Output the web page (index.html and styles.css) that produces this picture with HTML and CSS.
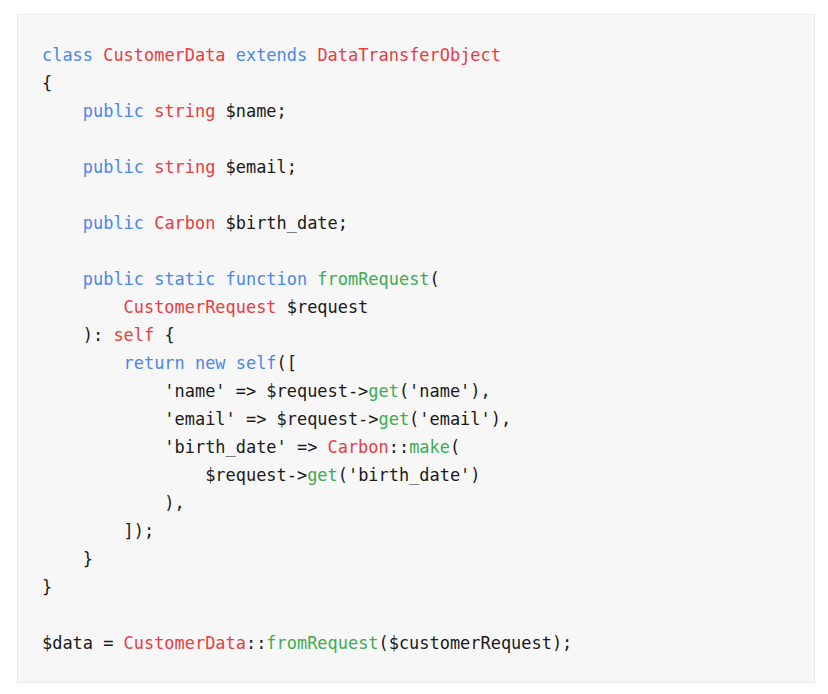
FILE: index.html
```html
<!DOCTYPE html>
<html>
<head>
<meta charset="utf-8">
<link rel="stylesheet" href="styles.css">
</head>
<body>
<div class="page">
<pre class="code"><code><span class="k">class</span> <span class="t">CustomerData</span> <span class="k">extends</span> <span class="t">DataTransferObject</span>
{
    <span class="k">public</span> <span class="t">string</span> $name;

    <span class="k">public</span> <span class="t">string</span> $email;

    <span class="k">public</span> <span class="t">Carbon</span> $birth_date;

    <span class="k">public</span> <span class="k">static</span> <span class="k">function</span> <span class="f">fromRequest</span>(
        <span class="t">CustomerRequest</span> $request
    ): <span class="t">self</span> {
        <span class="k">return</span> <span class="k">new</span> <span class="k">self</span>([
            'name' =&gt; $request-&gt;<span class="f">get</span>('name'),
            'email' =&gt; $request-&gt;<span class="f">get</span>('email'),
            'birth_date' =&gt; <span class="t">Carbon</span>::<span class="f">make</span>(
                $request-&gt;<span class="f">get</span>('birth_date')
            ),
        ]);
    }
}

$data = <span class="t">CustomerData</span>::<span class="f">fromRequest</span>($customerRequest);</code></pre>
</div>
</body>
</html>
```

FILE: styles.css
```css
html, body {
  margin: 0;
  padding: 0;
  background: #ffffff;
}
.page {
  padding: 14px 13px 0 17px;
}
.code {
  margin: 0;
  box-sizing: border-box;
  width: 798px;
  height: 669px;
  background: #f7f7f7;
  border: 1px solid #e9e9e9;
  padding: 26px 25px 24px 24px;
  font-family: "DejaVu Sans Mono", monospace;
  font-size: 16.95px;
  line-height: 28px;
  color: #1a1a1a;
  white-space: pre;
}
.k { color: #4a86ec; }
.t { color: #ea3c3f; }
.f { color: #3cac52; }
```
